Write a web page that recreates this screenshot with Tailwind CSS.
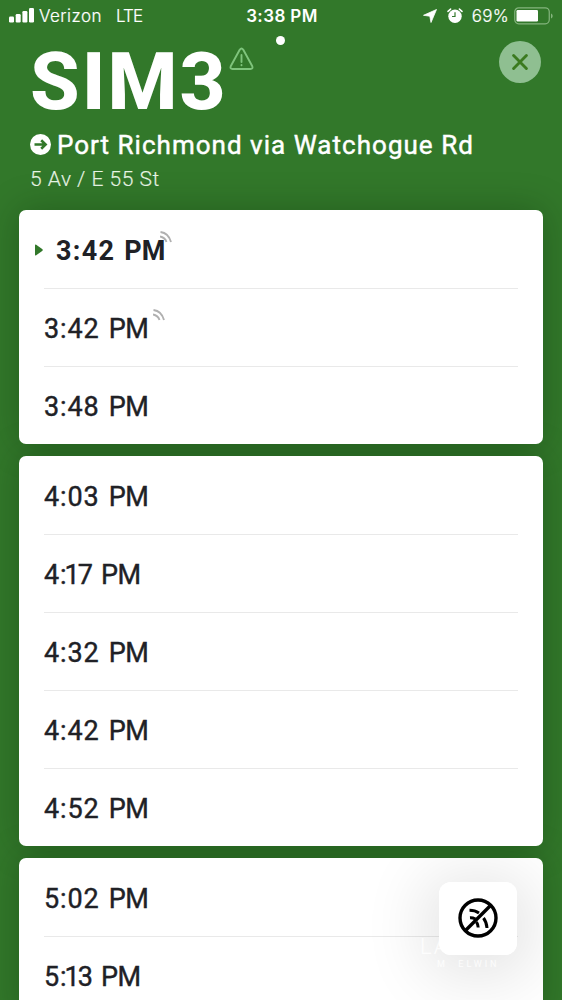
<!DOCTYPE html>
<html lang="en">
<head>
<meta charset="utf-8">
<title>SIM3 departures</title>
<script src="https://cdn.jsdelivr.net/npm/@tailwindcss/browser@4"></script>
</head>
<body class="h-[1000px] overflow-hidden bg-[#32782a] font-['Roboto',sans-serif] text-white">
<div class="relative h-[1000px] w-[562px] overflow-hidden">
  <div class="grid h-8 grid-cols-[1fr_auto_1fr] items-center pl-[9px] pr-[8px] font-['Inter',sans-serif] text-[17px] leading-8">
    <div class="flex items-center whitespace-nowrap">
      <svg class="h-4 w-[25px]" viewBox="0 0 25 16" fill="#fff"><rect x="0" y="8.500" width="5" height="6" rx="1.200"/><rect x="6.700" y="6" width="5" height="8.500" rx="1.200"/><rect x="13.400" y="3" width="5" height="11.500" rx="1.200"/><rect x="20" y="0" width="5" height="14.500" rx="1.200"/></svg>
      <span class="ml-[5px] w-[62px] font-light tracking-[0.450px] [-webkit-text-stroke:0.2px]">Verizon</span><span class="ml-[15px] font-light tracking-[-0.900px] [-webkit-text-stroke:0.2px]">LTE</span>
    </div>
    <div class="pl-px text-[17px] font-semibold tracking-[0.400px]">3:38 PM</div>
    <div class="flex items-center justify-end">
      <svg class="mr-[10px] h-[14px] w-[14px]" viewBox="0 0 14 14" fill="#fff" stroke="#fff" stroke-width=".8" stroke-linejoin="round"><path d="M13.500.5 8 13.500 6.800 7.200.5 6.300z"/></svg>
      <svg class="mr-[9px] h-4 w-4" viewBox="0 0 16 16"><circle cx="8" cy="8.200" r="6.700" fill="#fff"/><path d="M8 4.200v4.300H5" fill="none" stroke="#32782a" stroke-width="1.200"/><path d="M1 3.400 3.600 1.100M15 3.400 12.400 1.100" stroke="#fff" stroke-width="1.500" stroke-linecap="round"/></svg>
      <span class="mr-[5px] font-light tracking-[0.300px] [-webkit-text-stroke:0.2px]">69%</span>
      <svg class="h-[18px] w-[40px]" viewBox="0 0 40 18"><rect x=".75" y=".8" width="34.500" height="16" rx="4" fill="none" stroke="#84b47d" stroke-width="1.200"/><rect x="2.500" y="3" width="21.500" height="11.500" rx="1.200" fill="#fff"/><path d="M37 6.500v5c2.200-1 2.200-4 0-5" fill="#84b47d"/></svg>
    </div>
  </div>
  <div class="absolute left-[276px] top-9 size-[9px] rounded-full bg-white"></div>

  <header class="flex h-[178px] justify-between pl-[30px] pr-[21px]">
    <div class="whitespace-nowrap">
      <div class="flex h-[96px] items-start">
        <h1 class="w-[199px] text-[80px] font-extrabold leading-[101px] tracking-[2px]">SIM3</h1>
        <svg class="mt-[15px] h-6 w-[25px]" viewBox="0 0 25 24" fill="none" stroke="#7fc47c" stroke-width="1.900" stroke-linecap="round" stroke-linejoin="round"><path d="M10.700 2.700 1.700 19.200Q.8 22 3.500 22H21.500Q24.200 22 23.300 19.200L14.300 2.700Q12.500.2 10.700 2.700z"/><path d="M12.500 8v7M12.500 18v.2"/></svg>
      </div>
      <div class="flex h-[34px] items-center">
        <svg class="mr-[6px] -mt-px size-[21px]" viewBox="0 0 21 21"><circle cx="10.500" cy="10.500" r="10.500" fill="#fff"/><path d="M4.500 10.500H15M11.200 6.200 15.600 10.500 11.200 14.800" fill="none" stroke="#32782a" stroke-width="2.600"/></svg>
        <span class="text-[26px] font-normal leading-[34px] tracking-[1.020px] [-webkit-text-stroke:0.45px]">Port Richmond via Watchogue Rd</span>
      </div>
      <div class="text-[21px] font-light leading-[34px] tracking-[0.500px] text-[#e8f5e5] [-webkit-text-stroke:0.15px]">5 Av / E 55 St</div>
    </div>
    <button class="mt-[9px] flex size-[42px] items-center justify-center rounded-full bg-[#8fbf91]" aria-label="Close">
      <svg class="size-4" viewBox="0 0 18 18" stroke="#3b7a1f" stroke-width="3.200" stroke-linecap="round"><path d="M1.800 1.800 16.200 16.200M16.200 1.800 1.800 16.200"/></svg>
    </button>
  </header>

  <main class="relative z-0 ml-[19px] flex w-[524px] flex-col gap-3 whitespace-nowrap text-[27px] font-normal tracking-[0.900px] text-[#202126] [-webkit-text-stroke:0.4px]">
    <section class="relative rounded-[7px] bg-white px-[25px] pt-px before:absolute before:inset-0 before:-z-10 before:rounded-[7px] before:shadow-[0_0_36px_rgba(0,30,0,0.28)]">
      <div class="flex h-[78px] items-center border-b border-[#e9e9e9] pt-1">
        <svg class="-ml-[9px] mr-[13px] -mt-1 h-3 w-2" viewBox="0 0 8 12" fill="#32782a"><path d="M0 1.200Q0 0 1.200.7L7.500 5.300Q8 6 7.500 6.700L1.200 11.300Q0 12 0 10.800z"/></svg>
        <span class="w-[104px] font-bold tracking-[1.300px] [-webkit-text-stroke:0]">3:42<span class="ml-[9px] tracking-[0px]">PM</span></span>
        <svg class="-mt-[30px] h-3 w-3" viewBox="0 0 12 12" fill="none" stroke="#b0b0b0" stroke-width="1.900"><path d="M.5 1Q8.500 2 11 11M0 5.500Q5 6.500 6.500 11"/></svg>
      </div>
      <div class="flex h-[78px] items-center border-b border-[#e9e9e9] pt-1"><span class="w-[109px]">3:42<span class="ml-[9px] tracking-[-0.500px]">PM</span></span>
        <svg class="-mt-[30px] h-3 w-3" viewBox="0 0 12 12" fill="none" stroke="#b0b0b0" stroke-width="1.900"><path d="M.5 1Q8.500 2 11 11M0 5.500Q5 6.500 6.500 11"/></svg>
      </div>
      <div class="flex h-[77px] items-center pt-1">3:48<span class="ml-[9px] tracking-[-0.500px]">PM</span></div>
    </section>
    <section class="relative rounded-[7px] bg-white px-[25px] pt-px before:absolute before:inset-0 before:-z-10 before:rounded-[7px] before:shadow-[0_0_36px_rgba(0,30,0,0.28)]">
      <div class="flex h-[78px] items-center border-b border-[#e9e9e9] pt-1">4:03<span class="ml-[9px] tracking-[-0.500px]">PM</span></div>
      <div class="flex h-[78px] items-center border-b border-[#e9e9e9] pt-1">4<span class="tracking-[-2px]">:1</span><span class="tracking-[-1px]">7</span><span class="ml-[9px] tracking-[-0.500px]">PM</span></div>
      <div class="flex h-[78px] items-center border-b border-[#e9e9e9] pt-1">4:32<span class="ml-[9px] tracking-[-0.500px]">PM</span></div>
      <div class="flex h-[78px] items-center border-b border-[#e9e9e9] pt-1">4:42<span class="ml-[9px] tracking-[-0.500px]">PM</span></div>
      <div class="flex h-[77px] items-center pt-1">4:52<span class="ml-[9px] tracking-[-0.500px]">PM</span></div>
    </section>
    <section class="relative h-[160px] rounded-t-[7px] bg-white px-[25px] pt-px before:absolute before:inset-0 before:-z-10 before:rounded-[7px] before:shadow-[0_0_36px_rgba(0,30,0,0.28)]">
      <div class="flex h-[78px] items-center border-b border-[#e9e9e9] pt-1">5:02<span class="ml-[9px] tracking-[-0.500px]">PM</span></div>
      <div class="flex h-[77px] items-center pt-1">5<span class="tracking-[-2px]">:1</span><span class="tracking-[-1px]">3</span><span class="ml-[9px] tracking-[-0.500px]">PM</span></div>
      <div class="absolute inset-0 overflow-hidden rounded-t-[7px] [-webkit-text-stroke:0]">
        <div class="absolute left-[420px] top-[24px] h-[73px] w-[78px] rounded-[12px] shadow-[0_8px_64px_14px_rgba(0,0,0,0.11)]"></div>
        <div class="absolute left-[401px] top-[77px] text-[22px] font-light leading-6 tracking-[2px] text-white/80">LA</div>
        <div class="absolute left-[418px] top-[100px] text-[9px] font-normal leading-3 tracking-[3px] text-white/80">M&nbsp; ELWIN</div>
      </div>
      <button class="absolute left-[420px] top-[24px] flex h-[73px] w-[78px] items-center justify-center rounded-[12px] bg-white" aria-label="Live updates off">
        <svg class="mr-px -mt-px size-10" viewBox="0 0 40 40" fill="none" stroke="#000" stroke-width="3.400"><circle cx="20" cy="20" r="18"/><path d="M32.500 7.500 7.500 32.500"/><path d="M11.500 12.300Q17 12.300 21 15M25.500 20Q28.500 24 29 30M12 19.700Q14.500 19.500 17.500 21M18.500 24Q20 26.500 20.200 29.500" stroke-width="3"/></svg>
      </button>
    </section>
  </main>
</div>
</body>
</html>
